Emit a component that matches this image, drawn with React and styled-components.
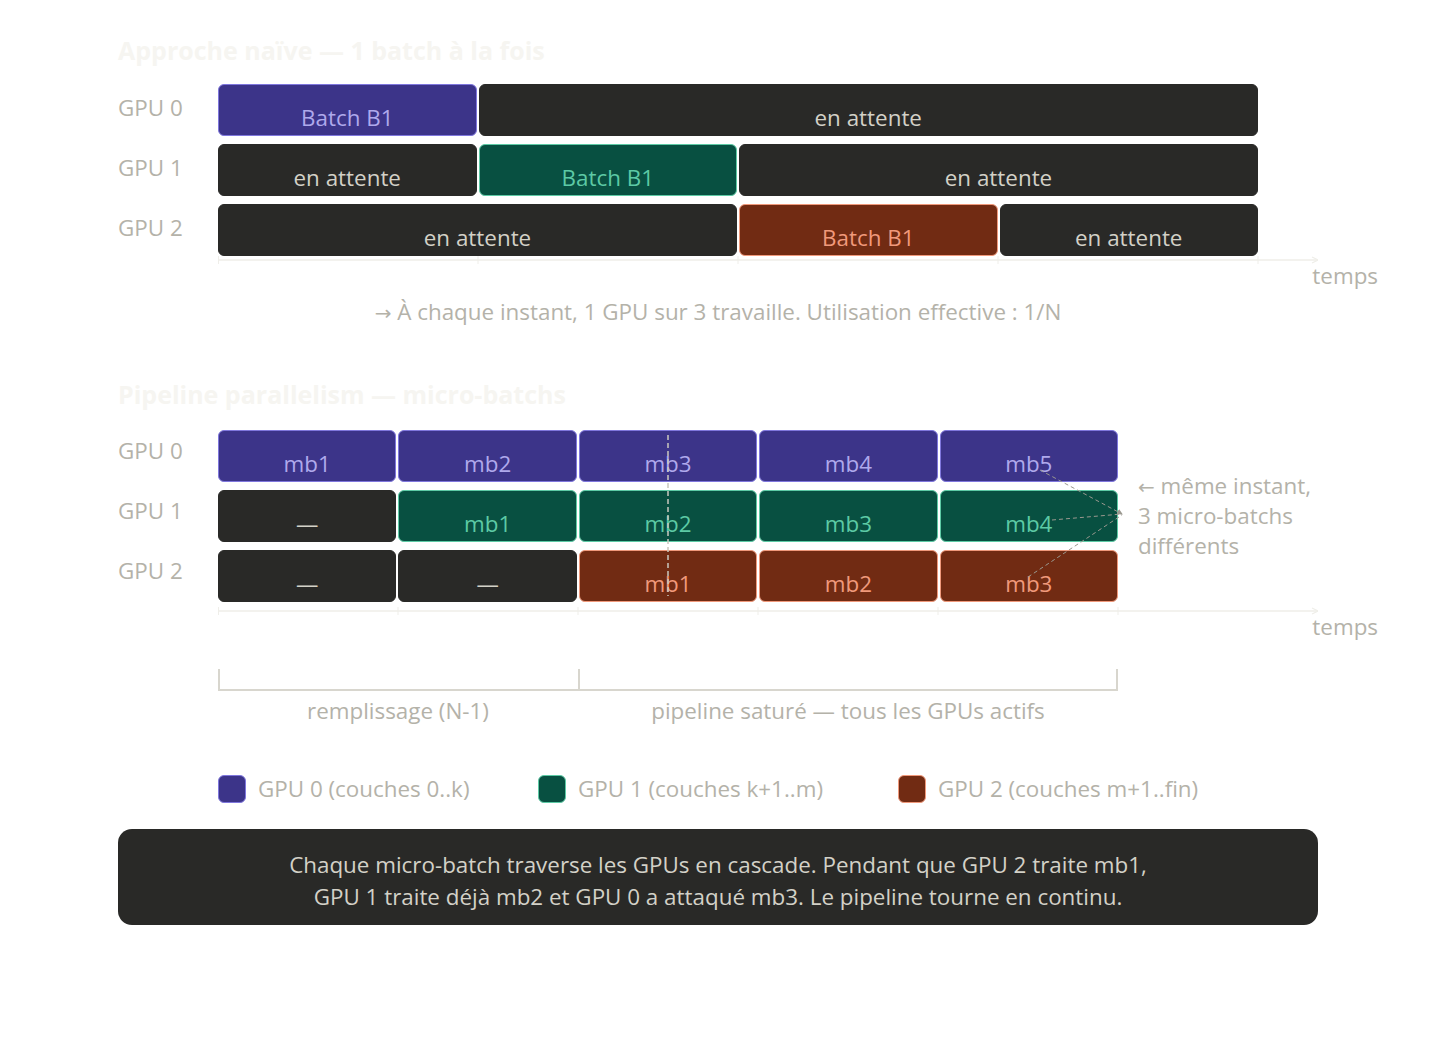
import React from 'react';
import styled, { createGlobalStyle } from 'styled-components';

const GlobalStyle = createGlobalStyle`
  html, body {
    margin: 0;
    padding: 0;
    background: #ffffff;
  }
  body {
    font-family: "Open Sans", "Noto Sans", sans-serif;
    -webkit-font-smoothing: antialiased;
  }
`;

const tones = {
  purple: { bg: '#3c3489', border: '#7f77dd', text: '#afa9ec' },
  teal: { bg: '#085041', border: '#5dcaa5', text: '#5dcaa5' },
  coral: { bg: '#712b13', border: '#f0997b', text: '#f0997b' },
  idle: { bg: '#292927', border: '#292927', text: '#d3d1c7' },
};

const Page = styled.div`
  width: 1200px;
  margin-left: 118px;
  padding-top: 34px;
  padding-bottom: 80px;
`;

const Title = styled.h2`
  margin: ${p => p.$top || 0}px 0 0;
  font-size: 25px;
  line-height: 32px;
  font-weight: 700;
  color: #f6f5f1;
`;

const Chart = styled.div`
  position: relative;
  display: grid;
  grid-template-columns: 100px ${p => p.$track}px auto;
  grid-auto-rows: 52px;
  row-gap: 8px;
  margin-top: ${p => p.$top}px;
`;

const RowLabel = styled.div`
  grid-column: 1;
  display: flex;
  align-items: center;
  padding-bottom: ${p => p.$lift}px;
  font-size: 22.4px;
  color: #b4b2a9;
`;

const Track = styled.div`
  grid-column: 2;
  display: grid;
  grid-template-columns: repeat(${p => p.$cols}, 1fr);
  column-gap: 2px;
`;

const Segment = styled.div`
  grid-column: span ${p => p.$span};
  box-sizing: border-box;
  padding-top: 20px;
  border-radius: 6px;
  border: 1px solid ${p => tones[p.$tone].border};
  background: ${p => tones[p.$tone].bg};
  color: ${p => tones[p.$tone].text};
  font-size: 22.4px;
  line-height: 26px;
  text-align: center;
  white-space: nowrap;
`;

const Note = styled.div`
  grid-column: 3;
  grid-row: 1 / span 3;
  padding: 41px 0 0 20px;
  font-size: 22.4px;
  line-height: 30px;
  color: #b4b2a9;
  white-space: nowrap;
`;

const Arrow = styled.span`
  font-family: "DejaVu Sans", sans-serif;
  font-size: 20px;
  line-height: 0;
`;

const Overlay = styled.svg`
  position: absolute;
  left: 100px;
  top: 0;
  pointer-events: none;
  overflow: visible;
`;

const AxisRow = styled.div`
  display: flex;
  flex-direction: column;
  width: 1160px;
  margin: ${p => p.$top}px 0 0 100px;
`;

const Temps = styled.div`
  align-self: flex-end;
  font-size: 22.4px;
  line-height: 24px;
  color: #b4b2a9;
`;

const Caption = styled.p`
  margin: 12px 0 0;
  font-size: 22.4px;
  line-height: 24px;
  text-align: center;
  color: #b4b2a9;
`;

const Phases = styled.div`
  display: grid;
  grid-template-columns: 360px 540px;
  margin: 30px 0 0 100px;
`;

const Phase = styled.div`
  display: flex;
  flex-direction: column;
`;

const Bracket = styled.div`
  height: 20px;
  border: 2px solid #d8d6ce;
  border-top: none;
  border-right: ${p => (p.$closed ? '2px solid #d8d6ce' : 'none')};
  margin-right: ${p => (p.$closed ? 0 : -2)}px;
`;

const PhaseLabel = styled.div`
  margin-top: 8px;
  font-size: 22.4px;
  line-height: 24px;
  text-align: center;
  color: #b4b2a9;
`;

const Legend = styled.div`
  display: grid;
  grid-template-columns: 320px 360px auto;
  margin: 52px 0 0 100px;
`;

const LegendItem = styled.div`
  display: flex;
  align-items: center;
  gap: 12px;
  font-size: 22.4px;
  line-height: 28px;
  color: #b4b2a9;
`;

const Swatch = styled.span`
  flex: none;
  width: 28px;
  height: 28px;
  box-sizing: border-box;
  border-radius: 6px;
  border: 1px solid ${p => tones[p.$tone].border};
  background: ${p => tones[p.$tone].bg};
`;

const Summary = styled.div`
  margin-top: 26px;
  padding: 20px 0 12px;
  border-radius: 14px;
  background: #292927;
  color: #d3d1c7;
  font-size: 22.4px;
  line-height: 32px;
  text-align: center;
`;

const Axis = ({ ticks }) => (
  <svg width="1100" height="8" style={{ display: 'block' }}>
    <line x1="0" y1="4" x2="1100" y2="4" stroke="#efeee9" strokeWidth="1.5" />
    {ticks.map(t => (
      <line key={t} x1={t} y1="0" x2={t} y2="8" stroke="#efeee9" strokeWidth="1" />
    ))}
    <polyline points="1094,1 1100,4 1094,7" fill="none" stroke="#efeee9" strokeWidth="1.2" />
  </svg>
);

const naive = [
  { gpu: 'GPU 0', segs: [{ span: 1, tone: 'purple', text: 'Batch B1' }, { span: 3, tone: 'idle', text: 'en attente' }] },
  { gpu: 'GPU 1', segs: [{ span: 1, tone: 'idle', text: 'en attente' }, { span: 1, tone: 'teal', text: 'Batch B1' }, { span: 2, tone: 'idle', text: 'en attente' }] },
  { gpu: 'GPU 2', segs: [{ span: 2, tone: 'idle', text: 'en attente' }, { span: 1, tone: 'coral', text: 'Batch B1' }, { span: 1, tone: 'idle', text: 'en attente' }] },
];

const mb = (tone, text) => ({ span: 1, tone, text });

const pipeline = [
  { gpu: 'GPU 0', segs: ['mb1', 'mb2', 'mb3', 'mb4', 'mb5'].map(t => mb('purple', t)) },
  { gpu: 'GPU 1', segs: [mb('idle', '—'), ...['mb1', 'mb2', 'mb3', 'mb4'].map(t => mb('teal', t))] },
  { gpu: 'GPU 2', segs: [mb('idle', '—'), mb('idle', '—'), ...['mb1', 'mb2', 'mb3'].map(t => mb('coral', t))] },
];

const Rows = ({ rows, cols, lift }) =>
  rows.map(row => (
    <React.Fragment key={row.gpu}>
      <RowLabel $lift={lift}>{row.gpu}</RowLabel>
      <Track $cols={cols}>
        {row.segs.map((s, i) => (
          <Segment key={i} $span={s.span} $tone={s.tone}>{s.text}</Segment>
        ))}
      </Track>
    </React.Fragment>
  ));

export default function App() {
  return (
    <Page>
      <GlobalStyle />

      <Title>Approche naïve — 1 batch à la fois</Title>
      <Chart $track={1040} $top={18}>
        <Rows rows={naive} cols={4} lift={5} />
      </Chart>
      <AxisRow $top={0}>
        <Axis ticks={[0.5, 260, 520, 780, 1040]} />
        <Temps>temps</Temps>
      </AxisRow>
      <Caption>
        <Arrow>→</Arrow> À chaque instant, 1 GPU sur 3 travaille. Utilisation effective : 1/N
      </Caption>

      <Title $top={54}>Pipeline parallelism — micro-batchs</Title>
      <Chart $track={900} $top={20}>
        <Rows rows={pipeline} cols={5} lift={11} />
        <Note>
          <Arrow>←</Arrow> même instant,
          <br />
          3 micro-batchs
          <br />
          différents
        </Note>
        <Overlay width="920" height="172">
          <defs>
            <marker id="tip" viewBox="0 0 6 6" refX="5" refY="3" markerWidth="6" markerHeight="6" orient="auto">
              <path d="M0,0 L6,3 L0,6 Z" fill="#9a988f" />
            </marker>
          </defs>
          <line x1="450" y1="5" x2="450" y2="166" stroke="#c9c7be" strokeWidth="1.5" strokeDasharray="5 3" />
          <g stroke="#9a988f" strokeWidth="1" strokeDasharray="4 3" fill="none">
            <line x1="822" y1="40" x2="904" y2="84" markerEnd="url(#tip)" />
            <line x1="834" y1="90" x2="904" y2="84" />
            <line x1="810" y1="147" x2="904" y2="85" />
          </g>
        </Overlay>
      </Chart>
      <AxisRow $top={5}>
        <Axis ticks={[0.5, 180, 360, 540, 720, 900]} />
        <Temps>temps</Temps>
      </AxisRow>

      <Phases>
        <Phase>
          <Bracket />
          <PhaseLabel>remplissage (N-1)</PhaseLabel>
        </Phase>
        <Phase>
          <Bracket $closed />
          <PhaseLabel>pipeline saturé — tous les GPUs actifs</PhaseLabel>
        </Phase>
      </Phases>

      <Legend>
        <LegendItem><Swatch $tone="purple" />GPU 0 (couches 0..k)</LegendItem>
        <LegendItem><Swatch $tone="teal" />GPU 1 (couches k+1..m)</LegendItem>
        <LegendItem><Swatch $tone="coral" />GPU 2 (couches m+1..fin)</LegendItem>
      </Legend>

      <Summary>
        Chaque micro-batch traverse les GPUs en cascade. Pendant que GPU 2 traite mb1,
        <br />
        GPU 1 traite déjà mb2 et GPU 0 a attaqué mb3. Le pipeline tourne en continu.
      </Summary>
    </Page>
  );
}
